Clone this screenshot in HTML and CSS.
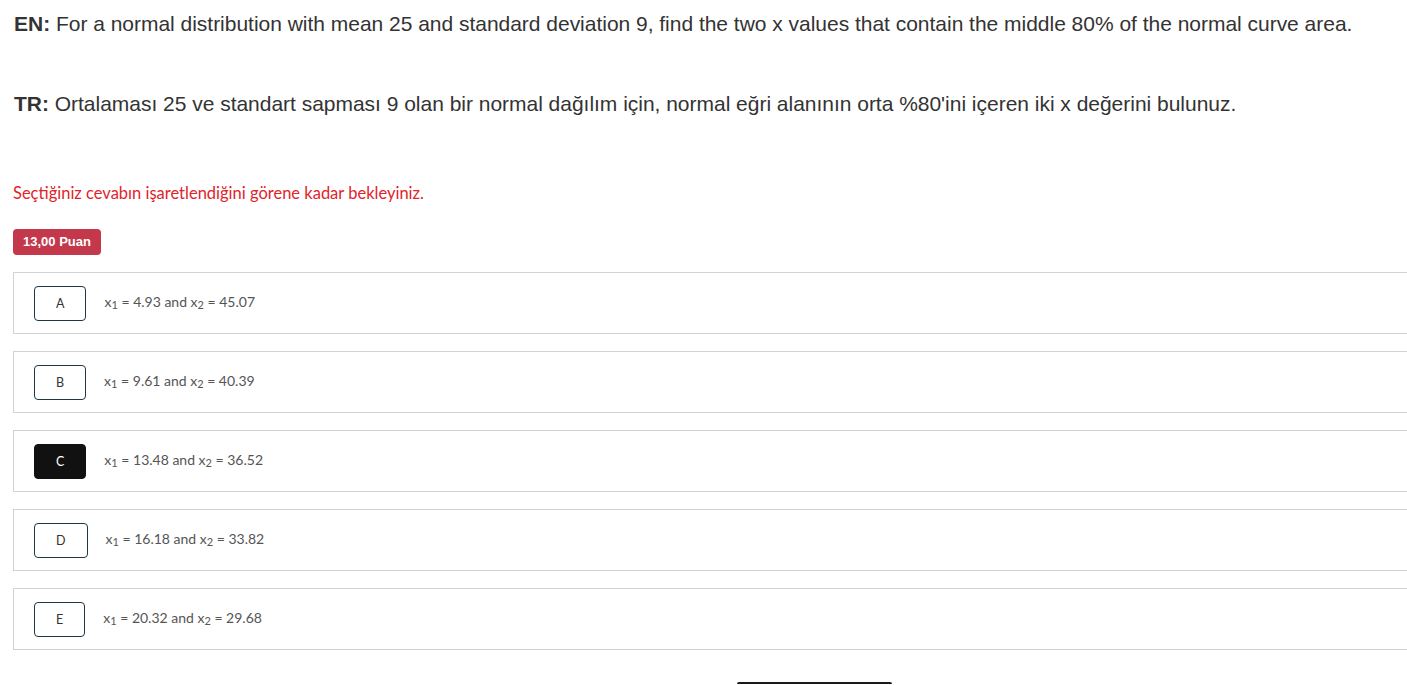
FILE: index.html
```html
<!DOCTYPE html>
<html lang="tr">
<head>
<meta charset="utf-8">
<title>Soru</title>
<link rel="stylesheet" href="styles.css">
</head>
<body>
<div class="page">
  <p class="question"><b>EN:</b> For a normal distribution with mean 25 and standard deviation 9, find the two x values that contain the middle 80% of the normal curve area.</p>
  <p class="question tr"><b>TR:</b> Ortalaması 25 ve standart sapması 9 olan bir normal dağılım için, normal eğri alanının orta %80'ini içeren iki x değerini bulunuz.</p>
  <p class="warning">Seçtiğiniz cevabın işaretlendiğini görene kadar bekleyiniz.</p>
  <span class="badge">13,00 Puan</span>
  <div class="options">
    <div class="option"><span class="letter">A</span><span class="answer">x<sub>1</sub> = 4.93 and x<sub>2</sub> = 45.07</span></div>
    <div class="option"><span class="letter">B</span><span class="answer">x<sub>1</sub> = 9.61 and x<sub>2</sub> = 40.39</span></div>
    <div class="option"><span class="letter selected">C</span><span class="answer">x<sub>1</sub> = 13.48 and x<sub>2</sub> = 36.52</span></div>
    <div class="option"><span class="letter">D</span><span class="answer">x<sub>1</sub> = 16.18 and x<sub>2</sub> = 33.82</span></div>
    <div class="option"><span class="letter">E</span><span class="answer">x<sub>1</sub> = 20.32 and x<sub>2</sub> = 29.68</span></div>
  </div>
  <div class="footer"><div class="next-btn"></div></div>
</div>
</body>
</html>
```
FILE: styles.css
```css
html, body {
  margin: 0;
  padding: 0;
  background: #fff;
  overflow: hidden;
}
.page {
  padding: 0 0 0 13px;
}
.question {
  font-family: "Liberation Sans", Arial, sans-serif;
  font-size: 21px;
  line-height: 24px;
  color: #333;
  margin: 12px 0 0 1px;
  letter-spacing: -0.02px;
}
.question b {
  font-weight: bold;
}
.question.tr {
  margin-top: 56px;
}
.warning {
  font-family: "Lato", "Noto Sans", sans-serif;
  font-size: 16.5px;
  line-height: 20px;
  color: #e0242c;
  margin: 67px 0 0 0;
}
.badge {
  display: inline-block;
  margin-top: 26px;
  background: #c3394b;
  color: #fff;
  font-family: "Liberation Sans", Arial, sans-serif;
  font-weight: bold;
  font-size: 13px;
  line-height: 26px;
  height: 26px;
  padding: 0 10px;
  border-radius: 4px;
}
.options {
  margin-top: 17px;
  display: flex;
  flex-direction: column;
  gap: 17px;
}
.option {
  display: flex;
  align-items: center;
  gap: 18px;
  border: 1px solid #d2d2d2;
  border-right: 0;
  padding: 13px 0 13px 20px;
  height: 34px;
}
.letter {
  box-sizing: border-box;
  height: 35px;
  padding: 0 21px;
  display: flex;
  align-items: center;
  justify-content: center;
  border: 1px solid #1d3844;
  border-radius: 4px;
  font-family: "Lato", "Noto Sans", sans-serif;
  font-size: 12.5px;
  color: #333;
}
.letter.selected {
  background: #111;
  border-color: #111;
  color: #fff;
}
.answer {
  font-family: "Lato", "Noto Sans", sans-serif;
  font-size: 14px;
  color: #555;
  padding-bottom: 3px;
}
.answer sub {
  font-size: 11px;
  vertical-align: -2px;
  line-height: 0;
}
.footer {
  display: flex;
  justify-content: center;
  margin-top: 32px;
  padding-left: 209px;
}
.next-btn {
  width: 155px;
  height: 0;
  border-top: 2px solid #1a1a1a;
  border-radius: 3px 3px 0 0;
}
```
